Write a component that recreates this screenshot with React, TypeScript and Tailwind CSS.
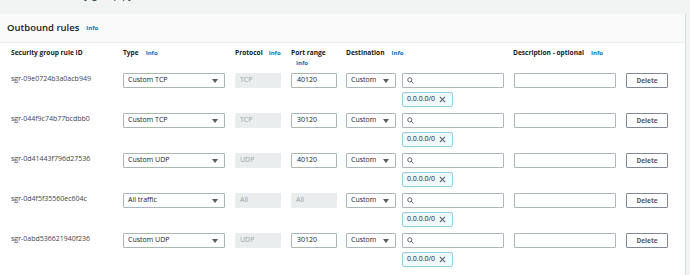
import React from "react";

const rows = [
  { id: "sgr-09e0724b3a0acb949", type: "Custom TCP", proto: "TCP", port: "40120", portDisabled: false },
  { id: "sgr-044f9c74b77bcdbb0", type: "Custom TCP", proto: "TCP", port: "30120", portDisabled: false },
  { id: "sgr-0d41443f796d27536", type: "Custom UDP", proto: "UDP", port: "40120", portDisabled: false },
  { id: "sgr-0d4f5f35560ec604c", type: "All traffic", proto: "All", port: "All", portDisabled: true },
  { id: "sgr-0abd536621940f236", type: "Custom UDP", proto: "UDP", port: "30120", portDisabled: false },
];

function Info() {
  return <span className="text-[6px] font-bold text-[#0073bb] leading-none">Info</span>;
}

function Caret() {
  return (
    <svg width="6" height="4" viewBox="0 0 6 4" className="shrink-0">
      <path d="M0 0 L6 0 L3 4 Z" fill="#545b64" />
    </svg>
  );
}

function Select({ value, w }: { value: string; w: string }) {
  return (
    <div className={`${w} h-[15px] border border-[#aab7b8] rounded-[1px] bg-white flex items-center justify-between pl-[4px] pr-[6px] text-[7px] text-[#16191f]`}>
      <span>{value}</span>
      <Caret />
    </div>
  );
}

export default function App() {
  return (
    <div
      className="w-[690px] h-[275px] overflow-hidden bg-[#f2f3f3] flex flex-col"
      style={{ fontFamily: '"Open Sans", "Liberation Sans", sans-serif' }}
    >
      <div className="h-[14px] shrink-0 relative overflow-hidden">
        <div className="absolute left-[52px] top-[-13.5px] text-[10px] text-[#16191f] whitespace-nowrap">Security group py</div>
      </div>
      <div className="w-[686px] flex-1 bg-white border-r border-[#d5dbdb] flex flex-col">
        <div className="h-[29px] shrink-0 bg-[#fafafa] border-b border-[#eaeded] flex items-center pl-[7px] gap-[7px]">
          <span className="text-[9.5px] font-semibold text-[#16191f] leading-none">Outbound rules</span>
          <Info />
        </div>
        <div className="h-[30px] shrink-0 flex pl-[11px] pt-[5px] text-[6.6px] font-bold text-[#16191f] leading-[10px]">
          <div className="w-[112px]">Security group rule ID</div>
          <div className="w-[112px] flex gap-[7px] items-center h-[10px]"><span>Type</span><Info /></div>
          <div className="w-[56px] flex gap-[6px] items-center h-[10px]"><span>Protocol</span><Info /></div>
          <div className="w-[55px] flex flex-col">
            <span>Port range</span>
            <span className="pl-[5px]"><Info /></span>
          </div>
          <div className="w-[167px] flex gap-[7px] items-center h-[10px]"><span>Destination</span><Info /></div>
          <div className="flex gap-[7px] items-center h-[10px]"><span>Description - optional</span><Info /></div>
        </div>
        {rows.map((r) => (
          <div key={r.id} className="h-[40px] shrink-0 flex items-start pl-[11px] text-[7px]">
            <div className="w-[112px] leading-[11px] text-[#3f444b]">{r.id}</div>
            <Select value={r.type} w="w-[102px]" />
            <div className="ml-[10px] w-[46px] h-[15px] bg-[#eaeded] rounded-[1px] flex items-center pl-[5px] text-[#95a5a6]">{r.proto}</div>
            {r.portDisabled ? (
              <div className="ml-[10px] w-[46px] h-[15px] bg-[#eaeded] rounded-[1px] flex items-center pl-[5px] text-[#95a5a6]">{r.port}</div>
            ) : (
              <div className="ml-[10px] w-[46px] h-[15px] border border-[#aab7b8] rounded-[1px] flex items-center pl-[5px] text-[#16191f]">{r.port}</div>
            )}
            <div className="ml-[9px]">
              <Select value="Custom" w="w-[50px]" />
            </div>
            <div className="ml-[6px] flex flex-col gap-[4px]">
              <div className="w-[102px] h-[15px] border border-[#aab7b8] rounded-[1px] flex items-center pl-[4px]">
                <svg width="7" height="7" viewBox="0 0 10 10">
                  <circle cx="4" cy="4" r="3" fill="none" stroke="#545b64" strokeWidth="1.3" />
                  <path d="M6.3 6.3 L9 9" stroke="#545b64" strokeWidth="1.4" strokeLinecap="round" />
                </svg>
              </div>
              <div className="w-[51px] h-[15px] border border-[#8fd0e6] bg-[#f1faff] rounded-[2px] flex items-center pl-[4px] gap-[4px] text-[#16191f]">
                <span>0.0.0.0/0</span>
                <svg width="7" height="7" viewBox="0 0 8 8">
                  <path d="M1 1 L7 7 M7 1 L1 7" stroke="#545b64" strokeWidth="1.2" />
                </svg>
              </div>
            </div>
            <div className="ml-[10px] w-[102px] h-[15px] border border-[#aab7b8] rounded-[1px]" />
            <div className="ml-[10px] w-[42px] h-[15px] border border-[#7d8998] rounded-[1px] flex items-center justify-center text-[6.5px] font-bold text-[#545b64]">Delete</div>
          </div>
        ))}
      </div>
    </div>
  );
}
